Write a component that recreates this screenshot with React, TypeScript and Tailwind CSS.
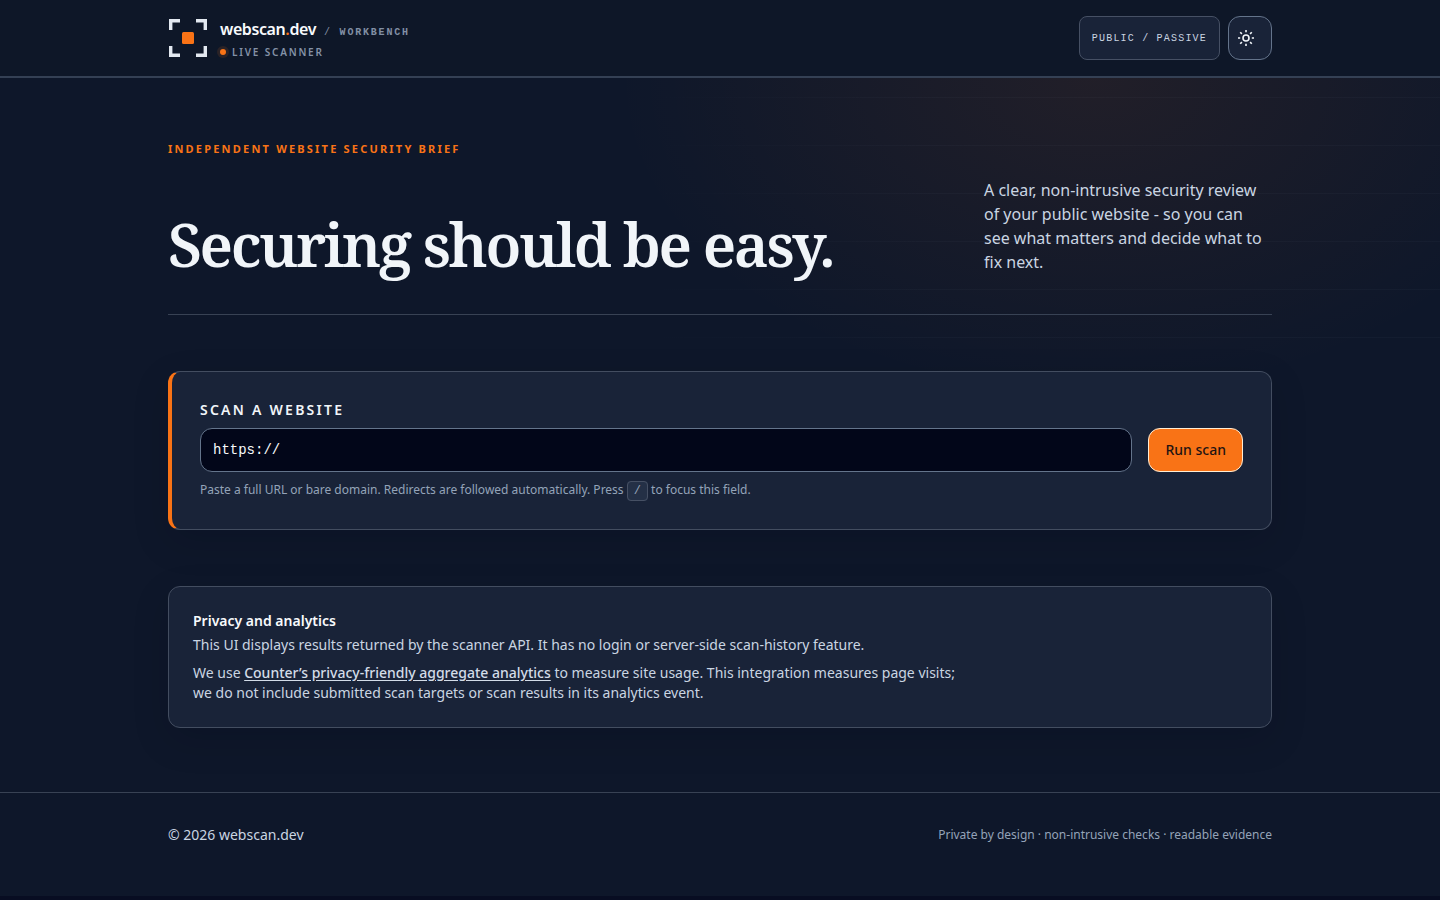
import { useEffect, useRef, useState } from "react";

function LogoMark() {
  return (
    <svg viewBox="0 0 40 40" className="size-10 shrink-0" aria-hidden="true">
      <path
        d="M2.700 12V2.700H12M28 2.700H37.300V12M2.700 28V37.300H12M28 37.300H37.300V28"
        fill="none"
        stroke="#e2e8f0"
        strokeWidth="3.400"
      />
      <rect x="14" y="14" width="12" height="12" rx="1.500" fill="#f97316" />
    </svg>
  );
}

function SunIcon() {
  return (
    <svg viewBox="0 0 18 18" className="size-4.5 shrink-0" fill="none" stroke="#f1f5f9" strokeWidth="1.600" aria-hidden="true">
      <circle cx="9" cy="9" r="3" />
      <path d="M9 1v2.200M9 14.800V17M1 9h2.200M14.800 9H17M3.200 3.200l1.700 1.700M13.100 13.100l1.700 1.700M14.800 3.200l-1.700 1.700M4.900 13.100l-1.700 1.700" />
    </svg>
  );
}

function Header() {
  return (
    <header className="border-b-2 border-[#344054] bg-[#0e1728]">
      <div className="mx-auto flex max-w-6xl items-center justify-between px-6 py-4">
        <a href="#top" className="flex items-center gap-3">
          <LogoMark />
          <div className="flex flex-col gap-[3px] pt-px">
            <div className="flex items-baseline gap-2 leading-6">
              <span className="text-base leading-6 font-semibold tracking-tight text-slate-50">
                webscan<span className="text-[#f97316]">.</span>dev
              </span>
              <span className="font-['Liberation_Mono',monospace] text-[10px] leading-none font-semibold tracking-[0.18em] text-[#8290a5] uppercase">
                <span className="font-normal">/</span> Workbench
              </span>
            </div>
            <div className="flex items-center gap-1.5 text-[10px] leading-4 font-semibold tracking-[0.18em] text-[#8492a7] uppercase">
              <span className="size-1.5 rounded-full bg-[#f97316] shadow-[0_0_0_3px_#f973161f]" />
              Live scanner
            </div>
          </div>
        </a>
        <div className="flex items-center gap-2">
          <span className="flex h-11 items-center rounded-lg border border-[#465064] bg-[#192338] px-3 font-['Liberation_Mono',monospace] text-[10px] tracking-[0.12em] text-slate-300 uppercase">
            Public / Passive
          </span>
          <button
            type="button"
            aria-label="Switch to light theme"
            className="flex size-11 items-center rounded-xl border border-[#64748b] bg-[#192338] px-2"
          >
            <SunIcon />
          </button>
        </div>
      </div>
    </header>
  );
}

function ScanForm() {
  const [url, setUrl] = useState("https://");
  const field = useRef<HTMLInputElement>(null);

  useEffect(() => {
    const onKey = (event: KeyboardEvent) => {
      if (event.key === "/" && document.activeElement !== field.current) {
        event.preventDefault();
        field.current?.focus();
      }
    };
    window.addEventListener("keydown", onKey);
    return () => window.removeEventListener("keydown", onKey);
  }, []);

  return (
    <form
      onSubmit={(event) => event.preventDefault()}
      className="mt-14 rounded-xl border border-l-4 border-[#434d60] border-l-[#f97316] bg-[#192338] px-7 pt-7 pb-[29px] shadow-[0_12px_36px_#02061726]"
    >
      <label htmlFor="target" className="block text-sm leading-5 font-semibold tracking-[0.16em] text-slate-100 uppercase">
        Scan a website
      </label>
      <div className="mt-2 flex gap-4">
        <input
          id="target"
          type="text"
          value={url}
          ref={field}
          onChange={(event) => setUrl(event.target.value)}
          className="h-11 min-w-0 flex-1 rounded-xl border border-[#64748b] bg-[#020619] px-3 font-['Liberation_Mono',monospace] text-sm text-slate-50 outline-none focus:border-[#f97316]"
        />
        <button type="submit" className="h-11 rounded-xl border border-orange-100 bg-[#f97316] px-4 text-sm font-medium text-[#1f1413]">
          Run scan
        </button>
      </div>
      <p className="mt-2 text-xs leading-5 text-[#94a3b8]">
        Paste a full URL or bare domain. Redirects are followed automatically. Press{" "}
        <kbd className="rounded border border-[#465064] bg-[#243046] px-1.5 py-0.5 font-['Liberation_Mono',monospace] text-xs">/</kbd> to
        focus this field.
      </p>
    </form>
  );
}

function Privacy() {
  return (
    <section className="mt-14 rounded-xl border border-[#434d60] bg-[#192338] p-6 text-sm leading-5 text-slate-300 shadow-[0_12px_36px_#02061726]">
      <h2 className="font-semibold text-slate-50">Privacy and analytics</h2>
      <p className="mt-1 max-w-3xl">This UI displays results returned by the scanner API. It has no login or server-side scan-history feature.</p>
      <p className="mt-2 max-w-3xl">
        We use{" "}
        <a href="#analytics" className="font-medium text-[#d3dce8] underline underline-offset-2">
          Counter’s privacy-friendly aggregate analytics
        </a>{" "}
        to measure site usage. This integration measures page visits; we do not include submitted scan targets or scan results in its
        analytics event.
      </p>
    </section>
  );
}

export default function App() {
  return (
    <div className="min-h-screen bg-[#080d22] font-['Noto_Sans',sans-serif]">
      <div id="top" className="bg-[#0e172a]">
        <Header />
        <div className="bg-[radial-gradient(ellipse_480px_320px_at_76%_0px,#f9731615,transparent),linear-gradient(to_right,#0e172a_45%,transparent_65%),repeating-linear-gradient(to_bottom,transparent_0px,transparent_19px,#94a3b80a_19px,#94a3b80a_20px,transparent_20px,transparent_48px)] bg-no-repeat [background-size:100%_100%,100%_100%,100%_280px]">
          <main className="mx-auto max-w-6xl px-6 py-16">
            <section className="border-b border-[#384254] pb-10">
              <p className="text-[11px] leading-3.5 font-bold tracking-[0.2em] text-[#f97316] uppercase">Independent website security brief</p>
              <div className="mt-5.5 flex flex-wrap items-end justify-between gap-8">
                <h1 className="font-['Noto_Serif',serif] text-6xl leading-none font-semibold tracking-[-0.04em] text-slate-100">
                  Securing should be easy.
                </h1>
                <p className="w-72 text-base leading-6 text-slate-300">
                  A clear, non-intrusive security review of your public website - so you can see what matters and decide what to fix next.
                </p>
              </div>
            </section>
            <ScanForm />
            <Privacy />
          </main>
        </div>
        <footer className="border-t border-[#384254]">
          <div className="mx-auto flex max-w-6xl items-center justify-between px-6 pt-8 pb-[51px]">
            <p className="text-sm leading-5 text-slate-300">© 2026 webscan.dev</p>
            <p className="text-xs leading-5 text-[#94a3b8]">Private by design · non-intrusive checks · readable evidence</p>
          </div>
        </footer>
      </div>
    </div>
  );
}
